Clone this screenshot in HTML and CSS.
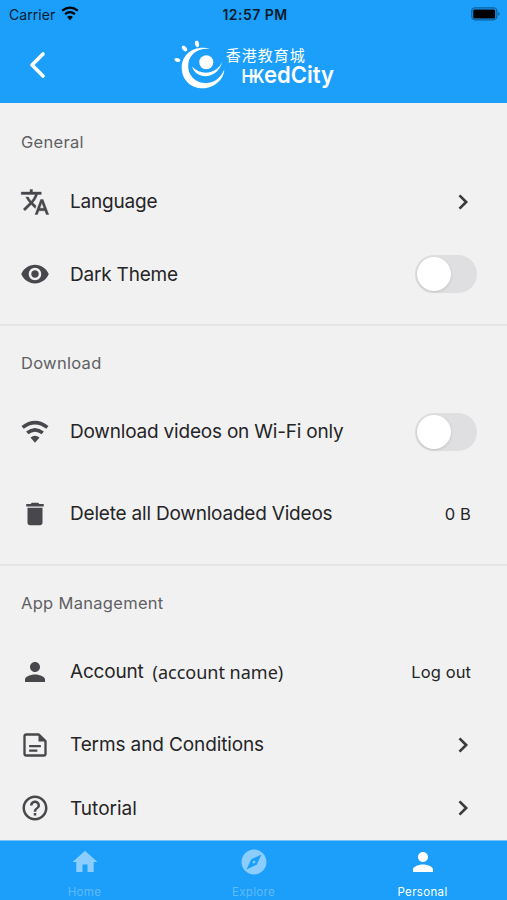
FILE: index.html
```html
<!DOCTYPE html>
<html lang="en">
<head>
<meta charset="utf-8">
<title>Settings</title>
<link rel="stylesheet" href="styles.css">
</head>
<body>
<svg class="defs" aria-hidden="true">
  <symbol id="person" viewBox="0 0 24 24"><path d="M12 12c2.21 0 4-1.79 4-4s-1.79-4-4-4-4 1.79-4 4 1.79 4 4 4zm0 2c-2.67 0-8 1.34-8 4v2h16v-2c0-2.66-5.33-4-8-4z"/></symbol>
  <symbol id="chevron" viewBox="0 0 24 24"><path d="M9 6.300l5.700 5.700L9 17.700" fill="none" stroke="currentColor" stroke-width="2.300"/></symbol>
  <symbol id="wifi" viewBox="0 0 26 22"><path d="M1.500 6.700Q13-2.100 24.500 6.700" fill="none" stroke="currentColor" stroke-width="3.400"/><path d="M5.800 11.900Q13 6 20.200 11.900" fill="none" stroke="currentColor" stroke-width="3.300"/><path d="M8.800 16.100Q13 12.800 17.200 16.100L13 21z"/></symbol>
</svg>
<div class="app">
  <header class="header">
    <div class="status">
      <div class="carrier"><span>Carrier</span><svg class="signal"><use href="#wifi"/></svg></div>
      <div class="time">12:57 PM</div>
      <svg class="battery" viewBox="0 0 31 14"><rect x="1.800" y=".8" width="25" height="12" rx="3.5" fill="none" stroke="#0c5f9e" stroke-width="1.2"/><rect x="3.200" y="2.600" width="22" height="8.800" rx="1.5"/><path d="M28.2 4.700q2.800 2.200 0 4.400z" fill="#0c5f9e"/></svg>
    </div>
    <div class="bar">
      <svg class="back" viewBox="0 0 18 28"><path d="M15 3L4 14l11 11" fill="none" stroke="#fff" stroke-width="3.600" stroke-linecap="round" stroke-linejoin="round"/></svg>
      <svg class="logo" viewBox="0 0 170 60" role="img" aria-label="HKedCity">
        <g fill="#fff">
          <path d="M40.800 14C25 9.500 11.500 19 11.700 33C12 46 22 53.500 33 53.300C45 53 54 44 54.300 34.500C50 44 43 48.500 34.500 48C24 47.300 18 39.500 18.200 30.500C18.500 20 27 12.500 40.800 14Z"/>
          <path d="M22 31.500C26 45 47 45.500 52.500 26.500C47 38.500 32 42 22 31.500Z"/>
          <circle cx="36.300" cy="27.300" r="7"/>
          <ellipse cx="7.400" cy="25" rx="3" ry="1.800" transform="rotate(20 7.400 25)"/>
          <ellipse cx="14.500" cy="13.500" rx="3.300" ry="2" transform="rotate(50 14.500 13.500)"/>
          <ellipse cx="27" cy="8.900" rx="3.300" ry="2" transform="rotate(78 27 8.900)"/>
          <text class="logo-zh" x="55.800" y="26" textLength="79" lengthAdjust="spacing">香港教育城</text>
          <text class="logo-hk" x="71.500" y="48.300" textLength="23" lengthAdjust="spacingAndGlyphs">HK</text>
          <path d="M80 40h5v2.500h-5z"/>
          <text class="logo-en" x="94" y="48.300" textLength="70" lengthAdjust="spacingAndGlyphs">edCity</text>
        </g>
      </svg>
    </div>
  </header>

  <main class="settings">
    <section class="group general">
      <h2>General</h2>
      <div class="row">
        <svg class="icon" viewBox="0 0 24 24"><path d="M12.870 15.070l-2.540-2.510.030-.030c1.740-1.940 2.980-4.170 3.710-6.530H17V4h-7V2H8v2H1v1.990h11.170C11.500 7.920 10.440 9.750 9 11.350 8.070 10.320 7.300 9.190 6.690 8h-2c.730 1.630 1.730 3.170 2.980 4.560l-5.090 5.020L4 19l5-5 3.110 3.110.760-2.040zM18.500 10h-2L12 22h2l1.120-3h4.750L21 22h2l-4.500-12zm-2.620 7l1.620-4.330L19.120 17h-3.240z" stroke="currentColor" stroke-width=".3"/></svg>
        <span class="label">Language</span><svg class="chev"><use href="#chevron"/></svg>
      </div>
      <div class="row">
        <svg class="icon" viewBox="0 0 24 24"><path d="M12 4.500C7 4.500 2.730 7.610 1 12c1.730 4.390 6 7.500 11 7.500s9.270-3.110 11-7.500c-1.730-4.390-6-7.500-11-7.500zM12 17c-2.760 0-5-2.240-5-5s2.240-5 5-5 5 2.240 5 5-2.240 5-5 5zm0-8c-1.660 0-3 1.340-3 3s1.340 3 3 3 3-1.340 3-3-1.340-3-3-3z"/></svg>
        <span class="label">Dark Theme</span><span class="switch"></span>
      </div>
    </section>
    <section class="group download">
      <h2>Download</h2>
      <div class="row">
        <svg class="icon wifi"><use href="#wifi"/></svg>
        <span class="label">Download videos on Wi-Fi only</span><span class="switch"></span>
      </div>
      <div class="row tall">
        <svg class="icon" viewBox="0 0 24 24"><path d="M6 19c0 1.100.900 2 2 2h8c1.100 0 2-.900 2-2V7H6v12zM19 4h-3.500l-1-1h-5l-1 1H5v2h14V4z"/></svg>
        <span class="label">Delete all Downloaded Videos</span><span class="value">0 B</span>
      </div>
    </section>
    <section class="group management">
      <h2>App Management</h2>
      <div class="row">
        <svg class="icon"><use href="#person"/></svg>
        <span class="label">Account</span><span class="account">(account name)</span><span class="value">Log out</span>
      </div>
      <div class="row">
        <svg class="icon doc" viewBox="0 0 24 24"><path d="M4.500 3h10.800L21 8.700V19.500Q21 21 19.500 21h-15Q3 21 3 19.500V4.500Q3 3 4.500 3z" fill="none" stroke="currentColor" stroke-width="2" stroke-linejoin="round"/><path d="M15 3v6h6zM7 12h10v2H7zM7 15.800h7v2H7z"/></svg>
        <span class="label terms">Terms and Conditions</span><svg class="chev"><use href="#chevron"/></svg>
      </div>
      <div class="row short">
        <svg class="icon" viewBox="0 0 24 24"><path d="M11 18h2v-2h-2v2zm1-16C6.480 2 2 6.480 2 12s4.480 10 10 10 10-4.480 10-10S17.520 2 12 2zm0 18c-4.410 0-8-3.590-8-8s3.590-8 8-8 8 3.590 8 8-3.590 8-8 8zm0-14c-2.210 0-4 1.790-4 4h2c0-1.100.900-2 2-2s2 .900 2 2c0 2-3 1.750-3 5h2c0-2.250 3-2.500 3-5 0-2.210-1.790-4-4-4z"/></svg>
        <span class="label loose">Tutorial</span><svg class="chev"><use href="#chevron"/></svg>
      </div>
    </section>
  </main>

  <nav class="tabs">
    <div class="tab"><svg viewBox="0 0 24 24"><path d="M10 20v-6h4v6h5v-8h3L12 3 2 12h3v8z"/></svg><span>Home</span></div>
    <div class="tab"><svg viewBox="0 0 24 24"><path d="M12 10.900c-.610 0-1.100.490-1.100 1.100s.490 1.100 1.100 1.100c.610 0 1.100-.490 1.100-1.100s-.490-1.100-1.100-1.100zM12 2C6.480 2 2 6.480 2 12s4.480 10 10 10 10-4.480 10-10S17.520 2 12 2zm2.190 12.190L6 18l3.810-8.190L18 6l-3.810 8.190z"/></svg><span>Explore</span></div>
    <div class="tab active"><svg><use href="#person"/></svg><span>Personal</span></div>
  </nav>
</div>
</body>
</html>
```
FILE: styles.css
```css
* { box-sizing: border-box; }
body { margin: 0; background: #f1f1f1; font-family: Inter, "Liberation Sans", sans-serif; color: #252527; }
.defs { position: absolute; width: 0; height: 0; }
svg { display: block; flex: none; fill: currentColor; }
.app { width: 507px; height: 900px; display: flex; flex-direction: column; overflow: hidden; }

.header { height: 103px; background: #1b9ffb; flex: none; }
.status { height: 28px; padding: 0 6px 0 9px; display: grid; grid-template-columns: 1fr auto 1fr; align-items: center; color: #061b2b; font-size: 14px; }
.carrier { display: flex; align-items: center; gap: 6px; letter-spacing: .05px; }
.signal { width: 18px; height: 15px; color: #000; margin-top: -2px; }
.time { font-weight: 600; font-size: 14px; letter-spacing: .45px; }
.battery { width: 31px; height: 14px; justify-self: end; margin-top: -1px; color: #000; }
.bar { height: 75px; display: flex; align-items: flex-start; }
.back { width: 18px; height: 28px; margin: 23px 0 0 28px; }
.logo { width: 170px; height: 60px; margin: 7px 0 0 124px; }
.logo-zh { font: 400 15px "Noto Sans CJK TC", sans-serif; }
.logo-hk { font: 600 19px Inter, sans-serif; }
.logo-en { font: 600 23.500px Inter, sans-serif; }

.settings { flex: 1; min-height: 0; display: flex; flex-direction: column; }
.group { padding: 0 30px 0 20px; flex: none; }
.group + .group { border-top: 2px solid #e5e5e6; }
.general { height: 221px; }
.download { height: 240px; }
.management { height: 276px; }
h2 { margin: 0; height: 62px; padding: 27px 0 0 1px; font-size: 16.500px; line-height: 24px; font-weight: 400; color: #606063; letter-spacing: .3px; }
.download h2, .management h2 { height: 69px; padding-top: 25px; }
.general .row + .row { height: 72px; }
.row { height: 73px; display: flex; align-items: center; }
.row.tall { height: 91px; }
.row.short { height: 54px; }
.icon { width: 30px; height: 30px; margin-right: 20px; color: #47474c; }
.icon.wifi { width: 28px; height: 24px; margin: 0 21px 0 1px; }
.icon.doc { width: 28px; height: 28px; margin: 0 21px 0 1px; }
.label { font-size: 19px; line-height: 26px; padding-top: 1px; white-space: nowrap; letter-spacing: -.2px; }
.label.terms { letter-spacing: -.12px; }
.label.loose { letter-spacing: 0; }
.chev { width: 28px; height: 28px; margin: 0 0 0 auto; color: #3b3b3e; }
.switch { width: 62px; height: 38px; border-radius: 19px; background: #dfdfe1; margin-left: auto; padding: 2px; }
.switch::before { content: ""; display: block; width: 34px; height: 34px; border-radius: 50%; background: #fff; box-shadow: 0 1px 3px #0002; }
.account { font: 18px "Noto Sans", sans-serif; margin: 0 0 0 9px; }
.value { margin: 0 6px 0 auto; font-size: 16.500px; white-space: nowrap; letter-spacing: .1px; }

.tabs { height: 60px; flex: none; background: #1b9ffb; display: grid; grid-template-columns: repeat(3, 1fr); border-top: 1px solid #76c5fc; }
.tab { display: flex; flex-direction: column; align-items: center; color: #8ccdff; font-size: 11.500px; line-height: 16px; letter-spacing: .35px; }
.tab svg { width: 30px; height: 30px; margin: 6px 0 7px; }
.tab span { color: #60b9fa; }
.tab.active, .tab.active span { color: #fff; }
```
